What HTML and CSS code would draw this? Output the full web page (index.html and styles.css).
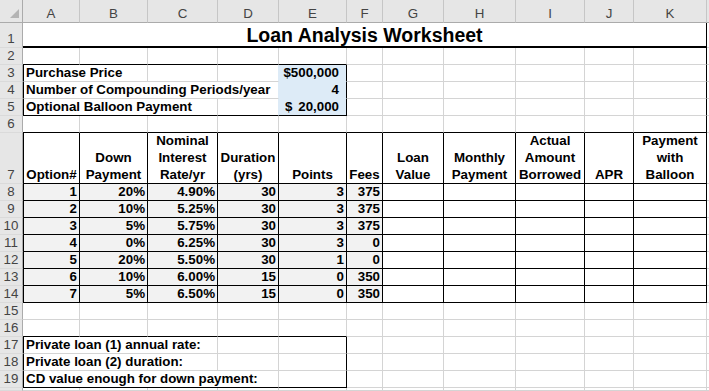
FILE: index.html
```html
<!DOCTYPE html>
<html lang="en">
<head>
<meta charset="utf-8">
<title>Loan Analysis Worksheet</title>
<link rel="stylesheet" href="styles.css">
</head>
<body>
<div class="sheet">
  <!-- column headers -->
  <div class="corner"><svg class="tri" width="10" height="10" viewBox="0 0 10 10"><polygon points="0,9 9,0 9,9" fill="#b4b4b4"/></svg></div>
  <div class="ch">A</div><div class="ch">B</div><div class="ch">C</div><div class="ch">D</div><div class="ch">E</div><div class="ch">F</div><div class="ch">G</div><div class="ch">H</div><div class="ch">I</div><div class="ch">J</div><div class="ch">K</div><div class="ch l"></div>

  <!-- row 1 -->
  <div class="rh">1</div>
  <div class="c title">Loan Analysis Worksheet</div>
  <div class="c l"></div>

  <!-- row 2 -->
  <div class="rh">2</div>
  <div class="c bb"></div><div class="c bb"></div><div class="c bb"></div><div class="c bb"></div><div class="c bb"></div>
  <div class="c"></div><div class="c"></div><div class="c"></div><div class="c"></div><div class="c"></div><div class="c br"></div>
  <div class="c l"></div>

  <!-- row 3 -->
  <div class="rh">3</div>
  <div class="c bl span2">Purchase Price</div>
  <div class="c"></div>
  <div class="c rblue"></div>
  <div class="c blue br bblue num acct-r">$500,000</div>
  <div class="c"></div><div class="c"></div><div class="c"></div><div class="c"></div><div class="c"></div><div class="c br"></div>
  <div class="c l"></div>

  <!-- row 4 -->
  <div class="rh">4</div>
  <div class="c bl span4 rblue">Number of Compounding Periods/year</div>
  <div class="c blue br bblue num acct-r">4</div>
  <div class="c"></div><div class="c"></div><div class="c"></div><div class="c"></div><div class="c"></div><div class="c br"></div>
  <div class="c l"></div>

  <!-- row 5 -->
  <div class="rh">5</div>
  <div class="c bl bb span3">Optional Balloon Payment</div>
  <div class="c bb rblue"></div>
  <div class="c blue br bb acct"><span>$</span><span>20,000</span></div>
  <div class="c"></div><div class="c"></div><div class="c"></div><div class="c"></div><div class="c"></div><div class="c br"></div>
  <div class="c l"></div>

  <!-- row 6 -->
  <div class="rh">6</div>
  <div class="c bb"></div><div class="c bb"></div><div class="c bb"></div><div class="c bb"></div><div class="c bb"></div><div class="c bb"></div><div class="c bb"></div><div class="c bb"></div><div class="c bb"></div><div class="c bb"></div><div class="c bb br"></div>
  <div class="c l"></div>

  <!-- row 7 -->
  <div class="rh">7</div>
  <div class="c th t bl">Option#</div>
  <div class="c th t">Down<br>Payment</div>
  <div class="c th t">Nominal<br>Interest<br>Rate/yr</div>
  <div class="c th t">Duration<br>(yrs)</div>
  <div class="c th t">Points</div>
  <div class="c th t">Fees</div>
  <div class="c th t">Loan<br>Value</div>
  <div class="c th t">Monthly<br>Payment</div>
  <div class="c th t">Actual<br>Amount<br>Borrowed</div>
  <div class="c th t">APR</div>
  <div class="c th t">Payment<br>with<br>Balloon</div>
  <div class="c l"></div>

  <!-- row 8 -->
  <div class="rh">8</div>
  <div class="c gray num t bl">1</div><div class="c gray num t">20%</div><div class="c gray num t">4.90%</div><div class="c gray num t">30</div><div class="c gray num t">3</div><div class="c gray num t">375</div>
  <div class="c t"></div><div class="c t"></div><div class="c t"></div><div class="c t"></div><div class="c t"></div>
  <div class="c l"></div>

  <!-- row 9 -->
  <div class="rh">9</div>
  <div class="c gray num t bl">2</div><div class="c gray num t">10%</div><div class="c gray num t">5.25%</div><div class="c gray num t">30</div><div class="c gray num t">3</div><div class="c gray num t">375</div>
  <div class="c t"></div><div class="c t"></div><div class="c t"></div><div class="c t"></div><div class="c t"></div>
  <div class="c l"></div>

  <!-- row 10 -->
  <div class="rh">10</div>
  <div class="c gray num t bl">3</div><div class="c gray num t">5%</div><div class="c gray num t">5.75%</div><div class="c gray num t">30</div><div class="c gray num t">3</div><div class="c gray num t">375</div>
  <div class="c t"></div><div class="c t"></div><div class="c t"></div><div class="c t"></div><div class="c t"></div>
  <div class="c l"></div>

  <!-- row 11 -->
  <div class="rh">11</div>
  <div class="c gray num t bl">4</div><div class="c gray num t">0%</div><div class="c gray num t">6.25%</div><div class="c gray num t">30</div><div class="c gray num t">3</div><div class="c gray num t">0</div>
  <div class="c t"></div><div class="c t"></div><div class="c t"></div><div class="c t"></div><div class="c t"></div>
  <div class="c l"></div>

  <!-- row 12 -->
  <div class="rh">12</div>
  <div class="c gray num t bl">5</div><div class="c gray num t">20%</div><div class="c gray num t">5.50%</div><div class="c gray num t">30</div><div class="c gray num t">1</div><div class="c gray num t">0</div>
  <div class="c t"></div><div class="c t"></div><div class="c t"></div><div class="c t"></div><div class="c t"></div>
  <div class="c l"></div>

  <!-- row 13 -->
  <div class="rh">13</div>
  <div class="c gray num t bl">6</div><div class="c gray num t">10%</div><div class="c gray num t">6.00%</div><div class="c gray num t">15</div><div class="c gray num t">0</div><div class="c gray num t">350</div>
  <div class="c t"></div><div class="c t"></div><div class="c t"></div><div class="c t"></div><div class="c t"></div>
  <div class="c l"></div>

  <!-- row 14 -->
  <div class="rh">14</div>
  <div class="c gray num t bl">7</div><div class="c gray num t">5%</div><div class="c gray num t">6.50%</div><div class="c gray num t">15</div><div class="c gray num t">0</div><div class="c gray num t">350</div>
  <div class="c t"></div><div class="c t"></div><div class="c t"></div><div class="c t"></div><div class="c t"></div>
  <div class="c l"></div>

  <!-- row 15 -->
  <div class="rh">15</div>
  <div class="c"></div><div class="c"></div><div class="c"></div><div class="c"></div><div class="c"></div><div class="c"></div><div class="c"></div><div class="c"></div><div class="c"></div><div class="c"></div><div class="c"></div>
  <div class="c l"></div>

  <!-- row 16 -->
  <div class="rh">16</div>
  <div class="c bb"></div><div class="c bb"></div><div class="c bb"></div><div class="c bb"></div><div class="c bb"></div>
  <div class="c"></div><div class="c"></div><div class="c"></div><div class="c"></div><div class="c"></div><div class="c"></div>
  <div class="c l"></div>

  <!-- row 17 -->
  <div class="rh">17</div>
  <div class="c bl span3">Private loan (1) annual rate:</div>
  <div class="c"></div>
  <div class="c br"></div>
  <div class="c"></div><div class="c"></div><div class="c"></div><div class="c"></div><div class="c"></div><div class="c"></div>
  <div class="c l"></div>

  <!-- row 18 -->
  <div class="rh">18</div>
  <div class="c bl span3">Private loan (2) duration:</div>
  <div class="c"></div>
  <div class="c br"></div>
  <div class="c"></div><div class="c"></div><div class="c"></div><div class="c"></div><div class="c"></div><div class="c"></div>
  <div class="c l"></div>

  <!-- row 19 -->
  <div class="rh">19</div>
  <div class="c bl bb span4">CD value enough for down payment:</div>
  <div class="c br bb"></div>
  <div class="c"></div><div class="c"></div><div class="c"></div><div class="c"></div><div class="c"></div><div class="c"></div>
  <div class="c l"></div>

  <!-- row 20 (partial) -->
  <div class="rh"></div>
  <div class="c"></div><div class="c"></div><div class="c"></div><div class="c"></div><div class="c"></div><div class="c"></div><div class="c"></div><div class="c"></div><div class="c"></div><div class="c"></div><div class="c"></div>
  <div class="c l"></div>
</div>
</body>
</html>
```

FILE: styles.css
```css
* {
  box-sizing: border-box;
  margin: 0;
  padding: 0;
}

html, body {
  width: 709px;
  height: 391px;
  overflow: hidden;
  background: #ffffff;
}

body {
  font-family: "Liberation Sans", Arial, sans-serif;
  color: #000;
}

.sheet {
  display: grid;
  grid-template-columns: 23px 57px 68px 70px 61px 68px 36px 61px 72px 69px 49px 73px 2px;
  grid-template-rows: 23px 25px repeat(5, 17px) 51px repeat(12, 17px) 1fr;
  height: 391px;
  width: 709px;
}

/* headers */
.corner,
.ch,
.rh {
  background: #e6e6e6;
  color: #444444;
  font-size: 13.33px;
  font-weight: normal;
  line-height: 16px;
  display: flex;
  align-items: flex-end;
  justify-content: center;
  white-space: nowrap;
}

.corner {
  border-right: 1px solid #ababab;
  border-bottom: 1px solid #ababab;
  padding: 0 2px 3px 0;
  justify-content: flex-end;
}

.tri {
  display: block;
}

.ch {
  border-right: 1px solid #c6c6c6;
  border-bottom: 1px solid #ababab;
}

.ch.l {
  border-right: none;
}

.rh {
  border-right: 1px solid #ababab;
  border-bottom: 1px solid #dadada;
}

/* cells */
.c {
  border-right: 1px solid #d4d4d4;
  border-bottom: 1px solid #d4d4d4;
  font-size: 13.33px;
  font-weight: bold;
  line-height: 16px;
  white-space: nowrap;
  display: flex;
  align-items: flex-end;
  padding: 0 2px;
  min-width: 0;
}

.l { border-right: none; }
.bl { border-left: 1px solid #000; }
.br { border-right-color: #000; }
.bb { border-bottom-color: #000; }
.t { border-right-color: #000; border-bottom-color: #000; }

.blue { background: #ddebf7; }
.gray { background: #f2f2f2; }
.rblue { border-right-color: #ddebf7; }
.bblue { border-bottom-color: #ddebf7; }

.num { justify-content: flex-end; }

.span2 { grid-column: span 2; }
.span3 { grid-column: span 3; }
.span4 { grid-column: span 4; }

.title {
  grid-column: span 11;
  border-bottom: 2px solid #000;
  border-right-color: #000;
  justify-content: center;
  font-size: 19.5px;
  line-height: 22px;
  padding-bottom: 0;
}

.acct-r { padding-right: 7px; }

.acct {
  justify-content: space-between;
  padding: 0 7px 0 6px;
}

.th {
  justify-content: center;
  text-align: center;
  line-height: 17px;
  padding: 0 1px;
}
```
